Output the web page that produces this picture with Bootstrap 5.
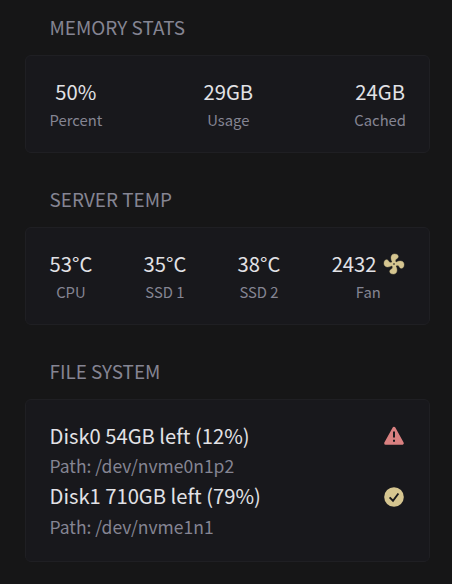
<!DOCTYPE html>
<html lang="en">
<head>
<meta charset="utf-8">
<meta name="viewport" content="width=device-width, initial-scale=1">
<title>Server stats</title>
<link href="https://cdn.jsdelivr.net/npm/bootstrap@5.3.0/dist/css/bootstrap.min.css" rel="stylesheet">
<style>
  body { background: #161617; color: #e2e2e6; font-family: "Noto Sans CJK JP", "Noto Sans", sans-serif; }
  .page { padding: 12px 22px 0 25px; }
  .widget-title { font-size: 18.9px; line-height: 30px; padding-left: 24.5px; margin-bottom: 13px; color: #858593; font-weight: 400; }
  .panel { background: #18181c; border: 1px solid #1f1f23; border-radius: 6px; padding: 21px 23.5px; }
  .widget + .widget { margin-top: 31px; }
  .stats { height: 98px; padding-right: 23px; }
  .value { font-size: 20.2px; line-height: 30px; }
  .caption { font-size: 14.8px; line-height: 22px; margin-top: 2px; color: #858593; }
  .disks { height: 163px; }
  .disk-path { font-size: 17.5px; line-height: 30px; color: #858593; }
  .disk-path:last-child { line-height: 32px; }
  .icon { width: 24px; height: 24px; display: block; }
  .fan { margin: 0 -1.5px 0 6px; }
  .check { margin-top: 2px; }
  .temps { padding-right: 24px; }
  .sand { color: #d5c590; }
  .rose { color: #d98080; }
</style>
<script src="https://cdn.jsdelivr.net/npm/bootstrap@5.3.0/dist/js/bootstrap.bundle.min.js" defer></script>
</head>
<body>
<main class="page">
  <section class="widget">
    <h2 class="widget-title">MEMORY STATS</h2>
    <div class="panel stats d-flex justify-content-between text-center">
      <div><div class="value">50%</div><div class="caption">Percent</div></div>
      <div><div class="value">29GB</div><div class="caption">Usage</div></div>
      <div><div class="value">24GB</div><div class="caption">Cached</div></div>
    </div>
  </section>
  <section class="widget">
    <h2 class="widget-title">SERVER TEMP</h2>
    <div class="panel stats temps d-flex justify-content-between text-center">
      <div><div class="value">53°C</div><div class="caption">CPU</div></div>
      <div><div class="value">35°C</div><div class="caption">SSD 1</div></div>
      <div><div class="value">38°C</div><div class="caption">SSD 2</div></div>
      <div>
        <div class="value d-flex align-items-center">2432
          <svg class="icon sand fan" viewBox="0 0 24 24" fill="currentColor"><path d="M12,11A1,1 0 0,0 11,12A1,1 0 0,0 12,13A1,1 0 0,0 13,12A1,1 0 0,0 12,11M12.500,2C17,2 17.110,5.570 14.750,6.750C13.760,7.240 13.320,8.290 13.130,9.220C13.610,9.420 14.030,9.730 14.350,10.130C18.050,8.130 22.030,8.920 22.030,12.500C22.030,17 18.460,17.100 17.280,14.730C16.780,13.740 15.720,13.300 14.790,13.110C14.590,13.590 14.280,14 13.880,14.340C15.870,18.030 15.080,22 11.500,22C7,22 6.910,18.420 9.270,17.240C10.250,16.750 10.690,15.710 10.890,14.790C10.400,14.590 9.970,14.270 9.650,13.870C5.960,15.850 2,15.070 2,11.500C2,7 5.560,6.890 6.740,9.260C7.240,10.250 8.290,10.680 9.220,10.870C9.410,10.390 9.730,9.970 10.140,9.650C8.150,5.960 8.940,2 12.500,2Z" stroke="currentColor" stroke-width=".4"/></svg>
        </div>
        <div class="caption">Fan</div>
      </div>
    </div>
  </section>
  <section class="widget">
    <h2 class="widget-title">FILE SYSTEM</h2>
    <div class="panel disks">
      <div class="value d-flex justify-content-between align-items-center">Disk0 54GB left (12%)
        <svg class="icon rose" viewBox="0 0 24 24"><path d="M12 4.200 20.300 19.300H3.700Z" fill="currentColor" stroke="currentColor" stroke-width="3" stroke-linejoin="round"/><path d="M12 7.500V13.500M12 15.700V17.700" stroke="#18181c" stroke-width="2"/></svg>
      </div>
      <div class="disk-path">Path: /dev/nvme0n1p2</div>
      <div class="value d-flex justify-content-between align-items-center">Disk1 710GB left (79%)
        <svg class="icon sand check" viewBox="0 0 24 24"><circle cx="12" cy="12" r="9.800" fill="currentColor"/><path d="M7.600 12.300 11 15.700 16.400 8.500" fill="none" stroke="#18181c" stroke-width="1.900"/></svg>
      </div>
      <div class="disk-path">Path: /dev/nvme1n1</div>
    </div>
  </section>
</main>
</body>
</html>
